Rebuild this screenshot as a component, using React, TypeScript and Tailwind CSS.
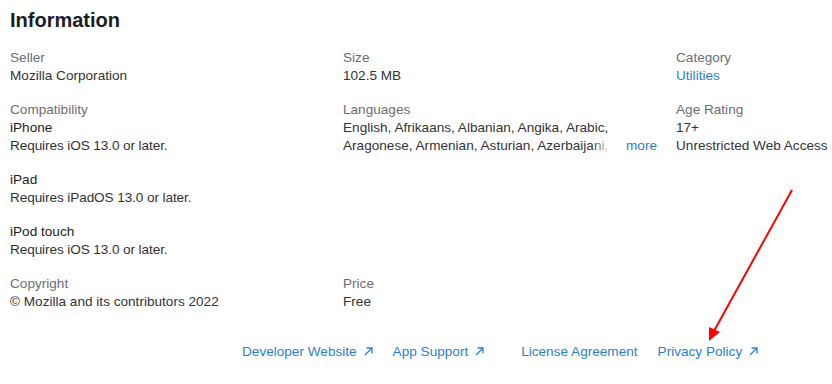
import React from "react";

const Arrow = () => (
  <svg width="9" height="9" viewBox="0 0 9 9" className="inline-block ml-[7px] -mt-[1px]" fill="none" stroke="#2a7fd4" strokeWidth="1.3">
    <path d="M1 8 L8 1" />
    <path d="M2.5 1 H8 V6.5" />
  </svg>
);

function Field({ label, children }: { label: string; children: React.ReactNode }) {
  return (
    <div className="flex flex-col">
      <div className="text-[#6e6e73]">{label}</div>
      {children}
    </div>
  );
}

export default function App() {
  return (
    <div
      className="relative w-[832px] h-[384px] bg-white overflow-hidden px-[10px] text-[13.6px] leading-[18px] text-[#333336]"
      style={{ fontFamily: '"Liberation Sans", Arial, sans-serif' }}
    >
      <h2 className="pt-[8px] text-[20px] leading-[24px] font-bold text-[#1d1d1f]">Information</h2>
      <div className="mt-[17px] grid grid-cols-[314px_314px_1fr] gap-x-[19px] gap-y-[16px]">
        <Field label="Seller">
          <div>Mozilla Corporation</div>
        </Field>
        <Field label="Size">
          <div>102.5 MB</div>
        </Field>
        <Field label="Category">
          <div className="text-[#2a7fd4]">Utilities</div>
        </Field>

        <Field label="Compatibility">
          <div className="flex flex-col gap-[16px]">
            <div>
              <div className="text-[#1d1d1f]">iPhone</div>
              <div className="tracking-[-0.1px]">Requires iOS 13.0 or later.</div>
            </div>
            <div>
              <div className="text-[#1d1d1f]">iPad</div>
              <div className="tracking-[-0.1px]">Requires iPadOS 13.0 or later.</div>
            </div>
            <div>
              <div className="text-[#1d1d1f]">iPod touch</div>
              <div className="tracking-[-0.1px]">Requires iOS 13.0 or later.</div>
            </div>
          </div>
        </Field>
        <Field label="Languages">
          <div className="relative flex">
            <div className="relative w-[272px]">
              <div>English, Afrikaans, Albanian, Angika, Arabic,</div>
              <div className="whitespace-nowrap">Aragonese, Armenian, Asturian, Azerbaijani,</div>
              <div className="absolute right-[2px] top-[18px] w-[22px] h-[18px] bg-gradient-to-r from-transparent to-white" />
            </div>
            <div className="absolute right-0 top-[18px] text-[#2a7fd4]">more</div>
          </div>
        </Field>
        <Field label="Age Rating">
          <div>17+</div>
          <div className="whitespace-nowrap">Unrestricted Web Access</div>
        </Field>

        <Field label="Copyright">
          <div>© Mozilla and its contributors 2022</div>
        </Field>
        <Field label="Price">
          <div>Free</div>
        </Field>
        <div />
      </div>

      <div className="mt-[32px] pl-[232px] flex items-center text-[#2a7fd4]">
        <span className="flex items-center">Developer Website<Arrow /></span>
        <span className="ml-[20px] flex items-center">App Support<Arrow /></span>
        <span className="ml-[37px]">License Agreement</span>
        <span className="ml-[20px] flex items-center">Privacy Policy<Arrow /></span>
      </div>

      <svg className="absolute left-0 top-0 pointer-events-none" width="832" height="384" viewBox="0 0 832 384">
        <line x1="792" y1="190" x2="714" y2="331" stroke="#ff0000" strokeWidth="2" />
        <polygon points="709,341 709,327 720,332" fill="#ff0000" />
      </svg>
    </div>
  );
}
